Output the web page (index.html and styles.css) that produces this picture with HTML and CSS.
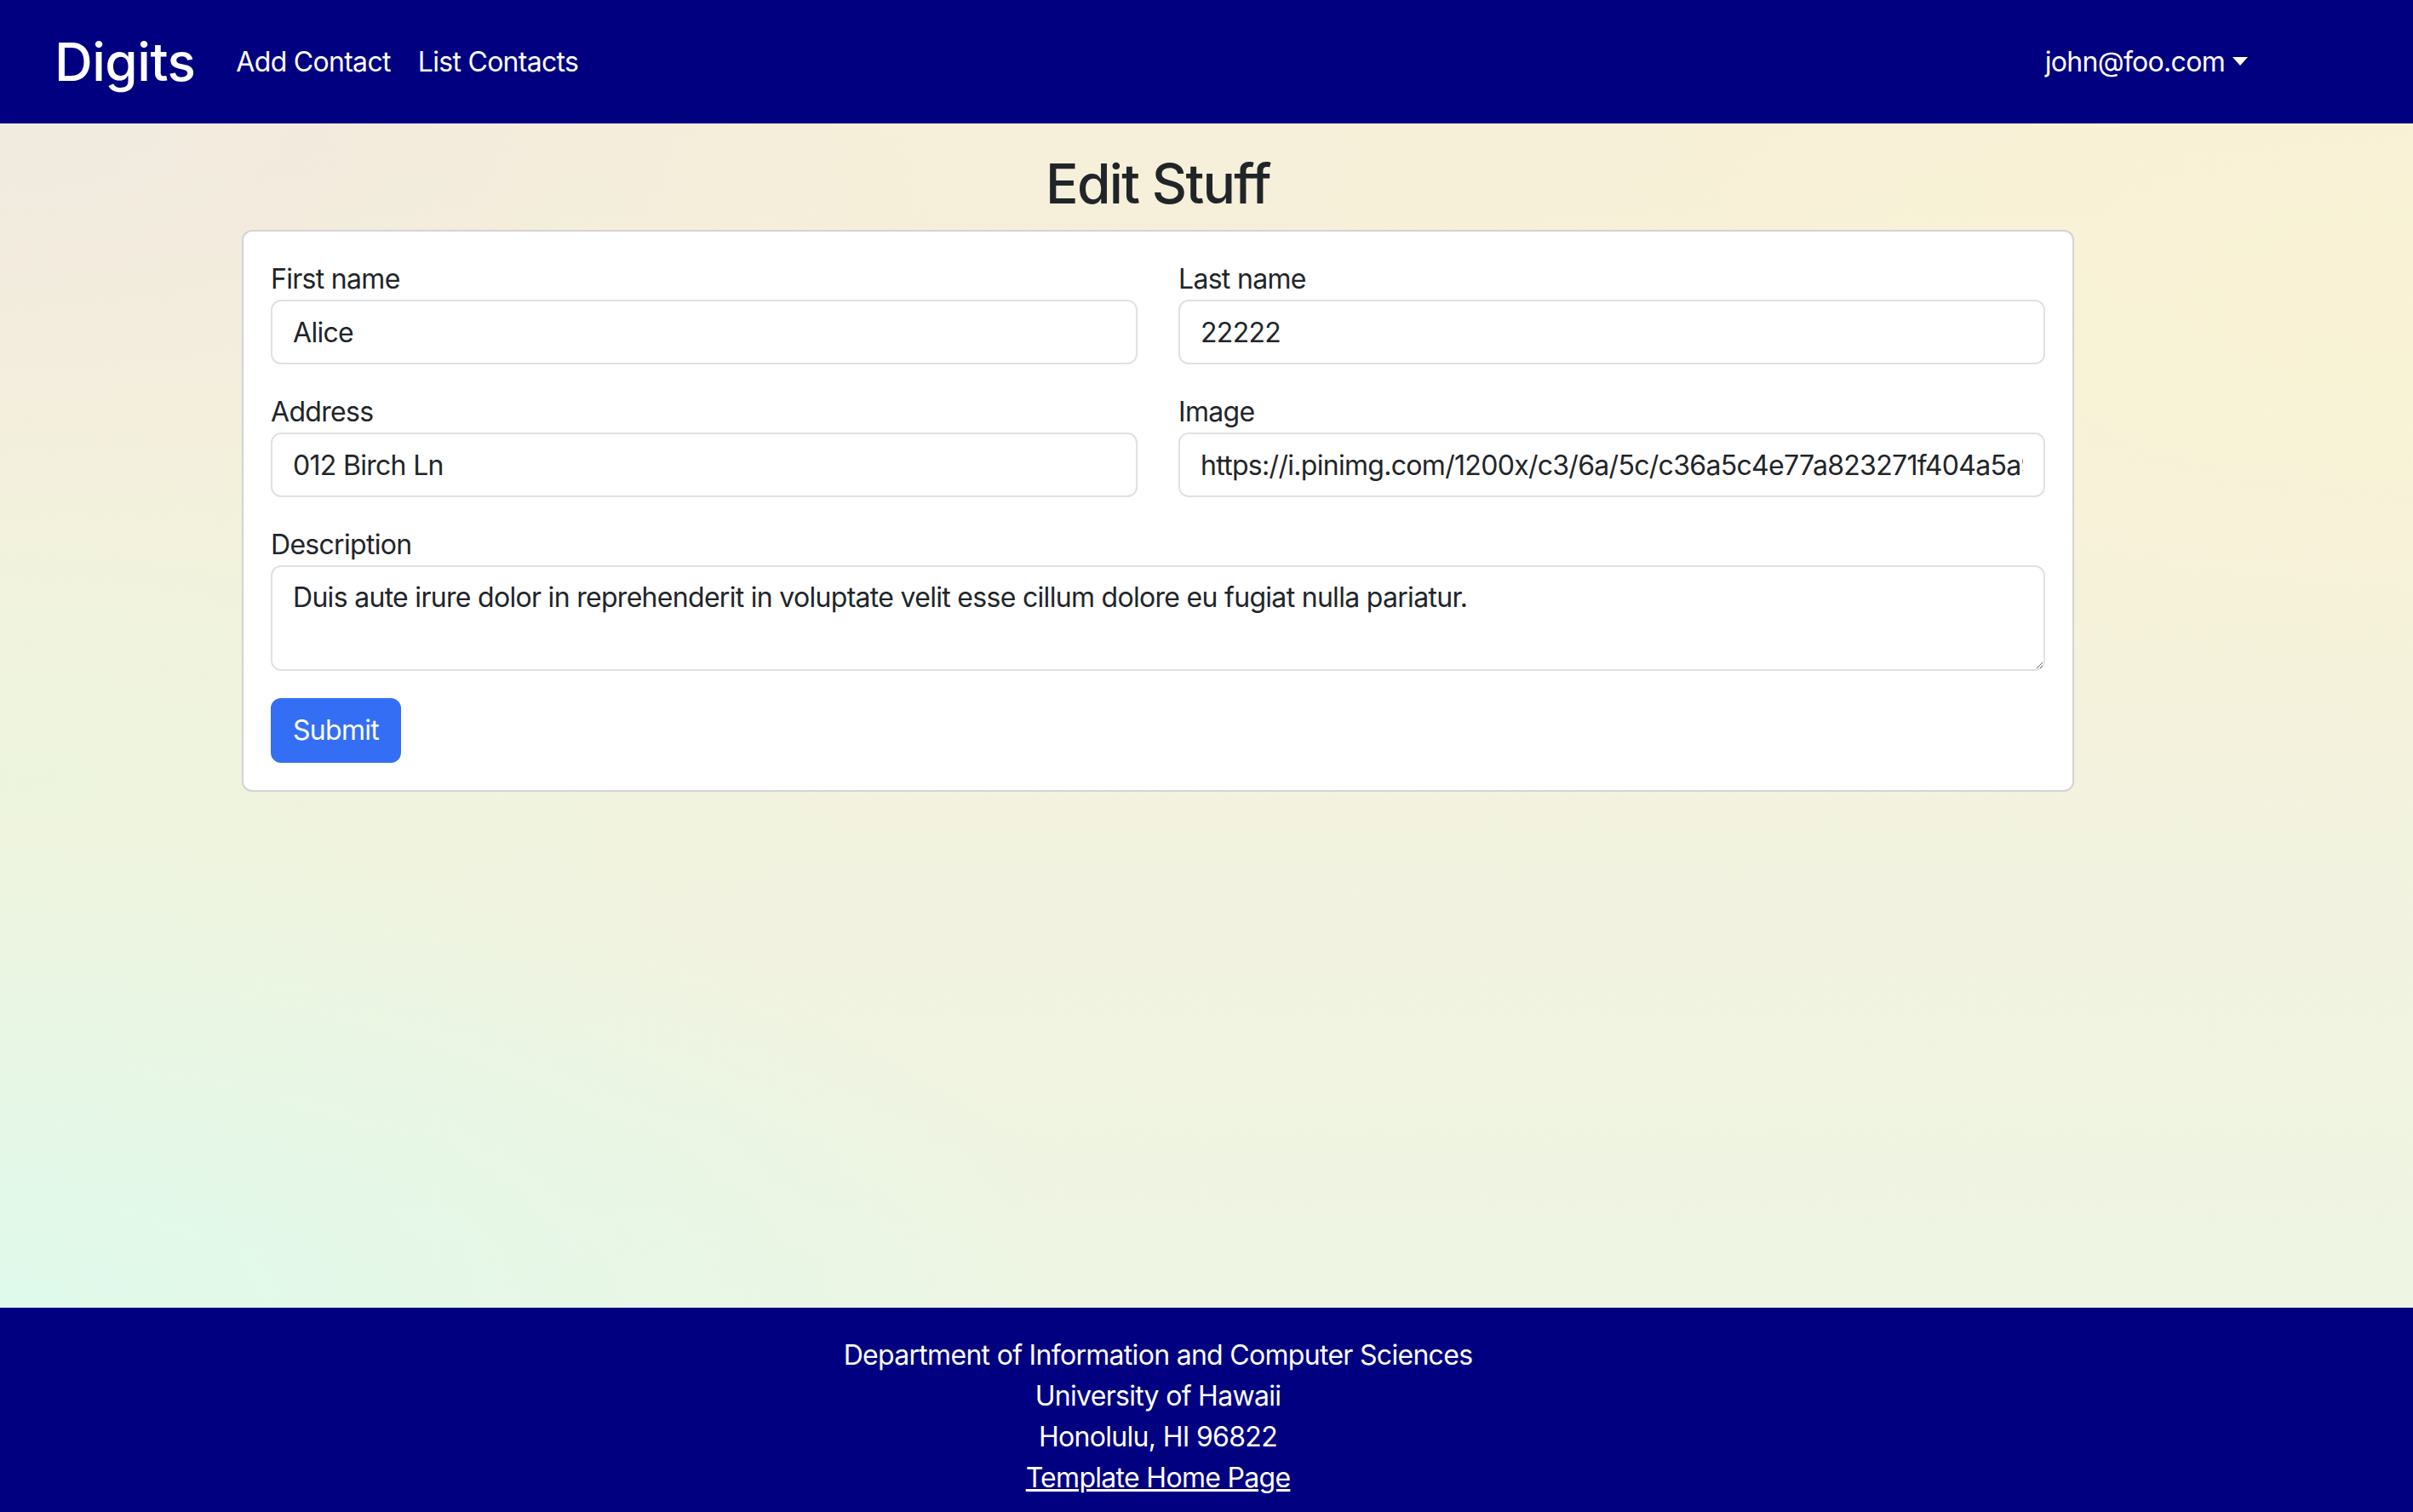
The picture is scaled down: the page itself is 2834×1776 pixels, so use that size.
FILE: index.html
```html
<!DOCTYPE html>
<html lang="en">
<head>
<meta charset="utf-8">
<title>Digits - Edit Stuff</title>
<link rel="stylesheet" href="styles.css">
</head>
<body>
<nav class="navbar">
  <div class="frame">
    <div class="nav-container">
      <a class="brand" href="#">Digits</a>
      <ul class="nav-links">
        <li><a class="nav-link" href="#">Add Contact</a></li>
        <li><a class="nav-link" href="#">List Contacts</a></li>
      </ul>
      <div class="nav-right">
        <a class="nav-link dropdown-toggle" href="#">john@foo.com<span class="caret"></span></a>
      </div>
    </div>
  </div>
</nav>

<main class="main">
  <div class="frame">
    <div class="content">
      <h2 class="title">Edit Stuff</h2>
      <form class="card">
        <div class="form-grid">
          <div class="form-group">
            <label class="form-label">First name</label>
            <input class="form-control" type="text" value="Alice">
          </div>
          <div class="form-group">
            <label class="form-label">Last name</label>
            <input class="form-control" type="text" value="22222">
          </div>
          <div class="form-group">
            <label class="form-label">Address</label>
            <input class="form-control" type="text" value="012 Birch Ln">
          </div>
          <div class="form-group">
            <label class="form-label">Image</label>
            <input class="form-control" type="text" value="https://i.pinimg.com/1200x/c3/6a/5c/c36a5c4e77a823271f404a5a99a8d2f8.jpg">
          </div>
          <div class="form-group full">
            <label class="form-label">Description</label>
            <textarea class="form-control textarea" rows="2">Duis aute irure dolor in reprehenderit in voluptate velit esse cillum dolore eu fugiat nulla pariatur.</textarea>
          </div>
        </div>
        <button class="btn-submit" type="button">Submit</button>
      </form>
    </div>
  </div>
</main>

<footer class="footer">
  <div class="frame">
    <div class="footer-text">
      <div>Department of Information and Computer Sciences</div>
      <div>University of Hawaii</div>
      <div>Honolulu, HI 96822</div>
      <div><a class="footer-link" href="#">Template Home Page</a></div>
    </div>
  </div>
</footer>
</body>
</html>
```

FILE: styles.css
```css
* { box-sizing: border-box; }

html, body {
  margin: 0;
  padding: 0;
}

body {
  font-family: Inter, "Noto Sans", "Liberation Sans", sans-serif;
  font-size: 32px;
  line-height: 48px;
  letter-spacing: -0.7px;
  color: #212529;
  background: #f3efdc;
}

.frame {
  padding-right: 114px;
}

/* Navbar */
.navbar {
  background: #000080;
  height: 145px;
}

.navbar .frame {
  height: 100%;
}

.nav-container {
  max-width: 2640px;
  height: 100%;
  margin: 0 auto;
  padding: 0 24px;
  display: flex;
  align-items: center;
}

.brand {
  color: #ffffff;
  text-decoration: none;
  font-size: 62px;
  font-weight: 500;
  line-height: 76px;
  margin-right: 32px;
  letter-spacing: -0.5px;
}

.nav-links {
  list-style: none;
  margin: 0;
  padding: 0;
  display: flex;
}

.nav-link {
  color: #ffffff;
  text-decoration: none;
  padding: 0 16px;
  display: inline-flex;
  align-items: center;
}

.nav-right {
  margin-left: auto;
}

.caret {
  display: inline-block;
  margin-left: 9px;
  border-top: 10px solid #ffffff;
  border-left: 9px solid transparent;
  border-right: 9px solid transparent;
  margin-top: -2px;
}

/* Main */
.main {
  min-height: 1391px;
  padding-top: 32px;
  background:
    radial-gradient(ellipse 45% 40% at 0% 100%, rgba(222, 250, 235, 0.95), rgba(222, 250, 235, 0) 100%),
    radial-gradient(ellipse 35% 30% at 0% 55%, rgba(236, 245, 222, 0.8), rgba(236, 245, 222, 0) 100%),
    radial-gradient(ellipse 50% 45% at 100% 15%, rgba(250, 243, 212, 0.9), rgba(250, 243, 212, 0) 100%),
    radial-gradient(ellipse 40% 35% at 0% 0%, rgba(240, 233, 224, 0.9), rgba(240, 233, 224, 0) 100%),
    linear-gradient(180deg, #f6efd9 0%, #f3f2de 50%, #eef5e3 100%);
}

.content {
  width: 2152px;
  margin: 0 auto;
}

.title {
  margin: 0 0 16px;
  text-align: center;
  font-size: 64px;
  font-weight: 500;
  line-height: 77px;
  color: #212529;
  letter-spacing: -1.7px;
}

.card {
  background: #ffffff;
  border: 2px solid #d3d3d4;
  border-radius: 12px;
  padding: 32px;
}

.form-grid {
  display: grid;
  grid-template-columns: 1fr 1fr;
  column-gap: 48px;
}

.form-group {
  margin-bottom: 32px;
}

.form-group.full {
  grid-column: 1 / -1;
}

.form-label {
  display: block;
  font-size: 32px;
  line-height: 48px;
  color: #212529;
}

.form-control {
  display: block;
  width: 100%;
  height: 76px;
  padding: 12px 24px;
  font-family: inherit;
  font-size: 32px;
  line-height: 48px;
  letter-spacing: -0.7px;
  color: #212529;
  background: #ffffff;
  border: 2px solid #dee2e6;
  border-radius: 12px;
  outline: none;
}

.textarea {
  height: 124px;
  resize: vertical;
}

.btn-submit {
  display: block;
  height: 76px;
  padding: 12px 24px;
  font-family: inherit;
  font-size: 32px;
  line-height: 48px;
  letter-spacing: -0.7px;
  color: #ffffff;
  background: #346ef5;
  border: 2px solid #346ef5;
  border-radius: 12px;
}

/* Footer */
.footer {
  background: #000080;
  color: #ffffff;
  padding: 32px 0;
}

.footer-text {
  text-align: center;
  font-size: 32px;
  line-height: 48px;
}

.footer-link {
  color: #ffffff;
  text-decoration: underline;
}
```
